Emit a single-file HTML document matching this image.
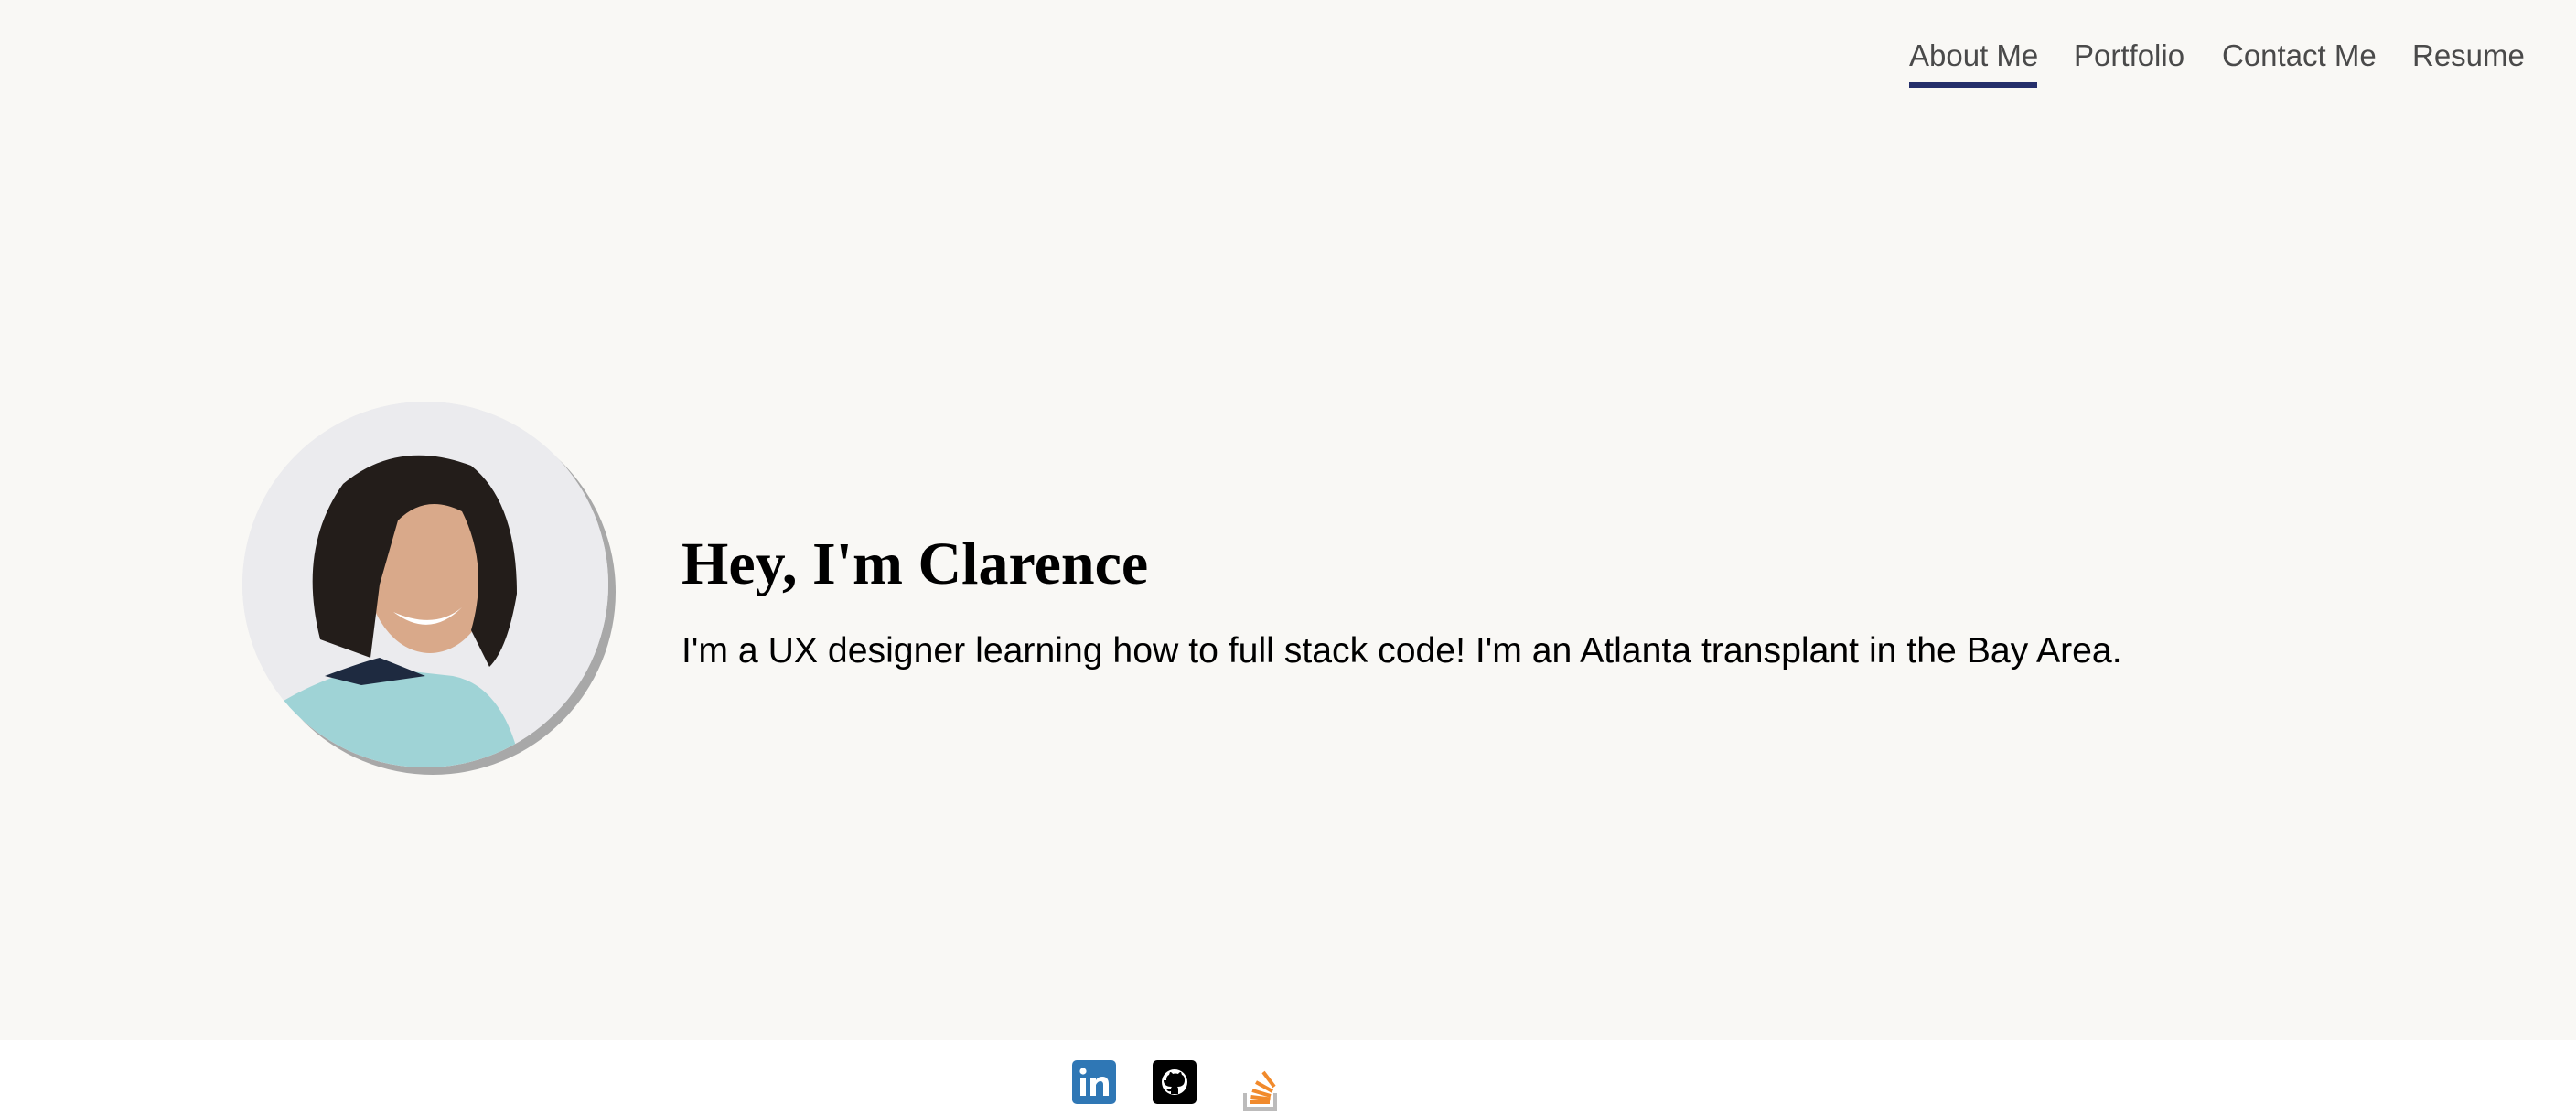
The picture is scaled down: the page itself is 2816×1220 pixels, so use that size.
<!DOCTYPE html>
<html><head><style>
html,body{margin:0;padding:0;}
body{width:2816px;height:1220px;background:#f9f8f5;position:relative;overflow:hidden;font-family:"Liberation Sans",sans-serif;}
.nav a{position:absolute;top:42px;font-size:33px;color:#4a4a4a;text-decoration:none;white-space:nowrap;}
.ul{position:absolute;left:2087px;top:90px;width:140px;height:6px;background:#252f6b;}
.photo{position:absolute;left:265px;top:439px;width:400px;height:400px;border-radius:50%;box-shadow:8px 8px 0 #a8a8a8;overflow:hidden;background:#e9e9eb;}
h1{position:absolute;left:745px;top:579px;margin:0;font-family:"Liberation Serif",serif;font-weight:bold;font-size:66px;color:#000;white-space:nowrap;}
p{position:absolute;left:745px;top:690px;margin:0;font-size:39.2px;color:#000;white-space:nowrap;}
.foot{position:absolute;left:0;top:1137px;width:2816px;height:83px;background:#fff;}
</style></head><body>
<div class="nav">
<a style="left:2087px">About Me</a>
<a style="left:2267px">Portfolio</a>
<a style="left:2429px">Contact Me</a>
<a style="left:2637px">Resume</a>
</div>
<div class="ul"></div>
<div class="photo">
<svg width="400" height="400" viewBox="0 0 400 400">
<rect width="400" height="400" fill="#ebebee"/>
<path d="M40 330 Q90 300 140 290 L230 300 Q280 310 300 380 L300 400 L40 400Z" fill="#9fd3d6"/>
<path d="M90 300 Q130 285 150 280 L200 300 L130 310Z" fill="#1e2a40"/>
<ellipse cx="205" cy="180" rx="70" ry="95" fill="#d9a98a"/>
<path d="M85 260 Q60 160 110 90 Q170 40 250 70 Q300 110 300 210 Q290 270 270 290 L250 250 Q270 180 240 120 Q200 100 170 130 L150 200 L140 280 Z" fill="#231d1a"/>
<path d="M165 230 Q205 260 240 225 Q210 250 165 230Z" fill="#fff"/>
</svg>
</div>
<h1>Hey, I'm Clarence</h1>
<p>I'm a UX designer learning how to full stack code! I'm an Atlanta transplant in the Bay Area.</p>
<div class="foot"></div>
<svg style="position:absolute;left:1172px;top:1159px" width="48" height="48" viewBox="0 0 48 48">
<rect width="48" height="48" rx="5" fill="#2f77b5"/>
<rect x="9" y="19" width="6" height="20" fill="#fff"/><circle cx="12" cy="12" r="3.6" fill="#fff"/>
<path d="M20 19h6v3q2-4 7-4q7 0 7 8v13h-6V27q0-4-3-4t-5 4v12h-6Z" fill="#fff"/>
</svg>
<svg style="position:absolute;left:1260px;top:1159px" width="48" height="48" viewBox="0 0 48 48">
<rect width="48" height="48" rx="5" fill="#000"/>
<circle cx="24" cy="24" r="14" fill="#fff"/>
<path d="M17 22q0-5 3-6l1-3q2 0 3 2q3-1 6 0q1-2 3-2l1 3q3 1 3 6q0 7-8 7q1 1 1 3v5h-8v-3q-4 1-5-3q3 1 5 0q0-1 1-2q-9 0-9-7Z" fill="#000" transform="translate(-2 0)"/>
</svg>
<svg style="position:absolute;left:1358px;top:1165px" width="42" height="50" viewBox="0 0 42 50">
<path d="M3 30v17h33V30" fill="none" stroke="#bcbbbb" stroke-width="4"/>
<g stroke="#f18a2c" stroke-width="4">
<path d="M9 40h21"/><path d="M9.5 34l21 2.5"/><path d="M11 27l20 6"/><path d="M15 18l18 10"/><path d="M23 7l12 16"/>
</g>
</svg>
</body></html>
